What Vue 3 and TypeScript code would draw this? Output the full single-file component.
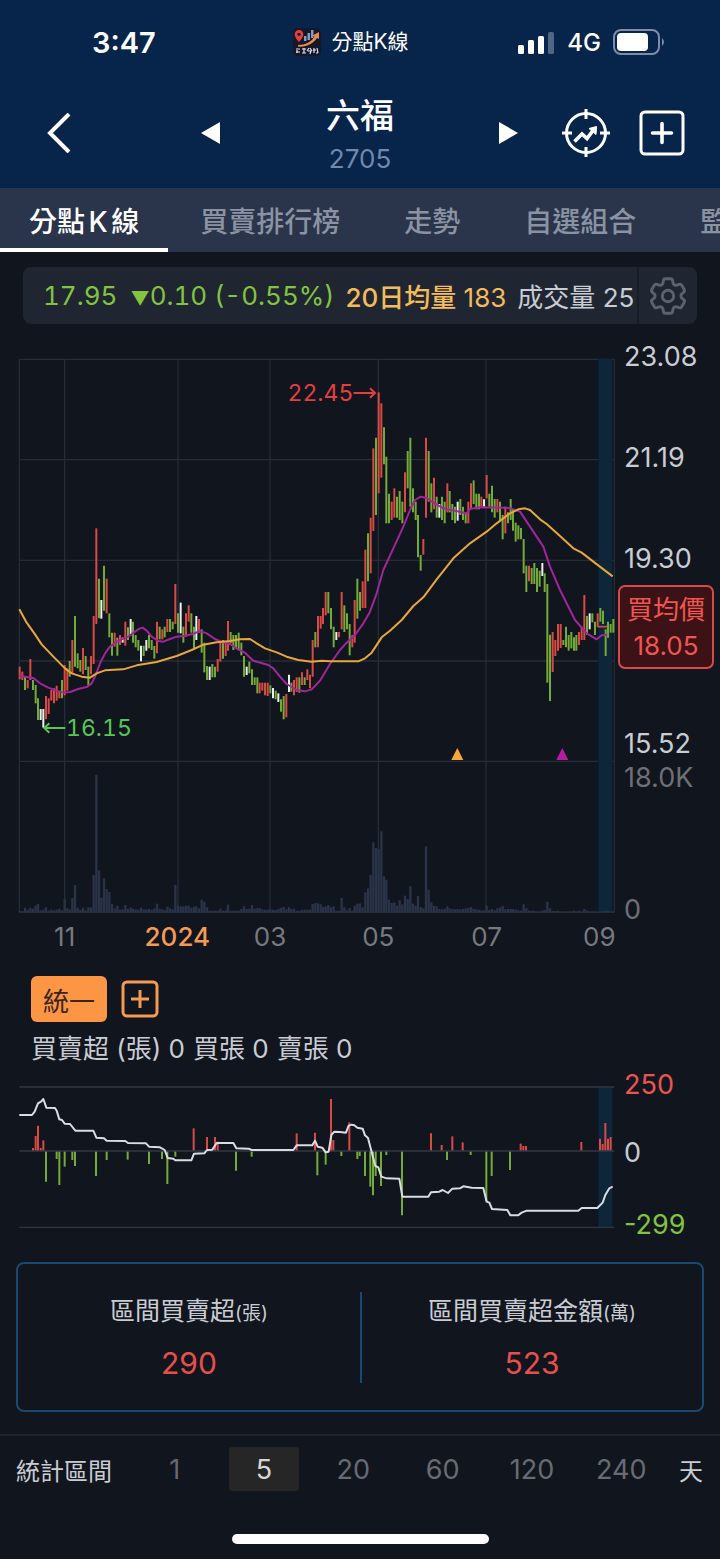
<script setup lang="ts">
import { ref } from 'vue'

type Candle = { x: number; high: number; low: number; kind: string }

// Chart space: three units per CSS pixel at the default width.
const FIRST_X = 59
const STEP = 7.917
const BASE = 1717
const xAt = (i: number): number => Math.round(FIRST_X + STEP * i)

const tabs = ['分點K線', '買賣排行榜', '走勢', '自選組合', '監控']
const activeTab = ref(0)

const periods = [1, 5, 20, 60, 120, 240]
const activePeriod = ref(5)

// One entry per trading day: colour, top, bottom.
const rawCandles = `
r980-1018 r995-1020 g1010-1050 r1020-1045 r957-1020 g1020-1050 g1035-1090 g1075-1140 w1107-1140 w1107-1163
r1068-1138 r1075-1122 r1050-1082 r1045-1090 r1037-1082 r1052-1075 g1020-1075 r975-1066 r985-1052 g963-1010
r900-1000 g828-980 g940-985 g960-995 r924-1003 g948-990 g980-1035 r948-1003 r828-972 r565-852
g716-835 w780-836 g677-812 r716-820 g820-892 g878-947 r878-920 g893-947 r885-915 w893-908
r845-917 g862-900 w837-883 g845-908 g885-922 g900-932 w917-964 g917-948 w900-932 g885-925
g900-930 g918-956 r845-940 g860-898 r868-898 g860-892 r837-876 g837-876 g845-868 r732-852
g820-878 w788-880 g860-908 r820-890 r796-845 g820-878 g860-925 w828-900 r837-878 g868-938
g908-997 g978-1020 w980-1020 g972-1012 g980-1012 r957-995 r905-965 g900-956 r908-948 r843-932
g876-910 g885-930 g885-925 g878-930 g908-946 g948-1010 w980-1005 g965-1000 g988-1035 g1012-1035
g1012-1060 r1028-1060 r1028-1052 r1028-1066 r1028-1068 g1036-1060 w1044-1075 g1052-1078 w1060-1086 g1078-1115
g1068-1138 r1062-1132 w1004-1056 g1028-1055 r1020-1066 r1012-1056 g1012-1058 r997-1035 g1012-1035 r988-1020
r1004-1045 r900-1010 g876-922 r828-922 r828-866 r804-852 r756-826 g756-820 g804-868 g860-922
w876-900 r876-892 r756-868 g796-876 g820-868 g852-946 r885-922 r780-908 g716-836 g756-812
r724-804 r629-804 g580-724 r533-700 r325-573 g293-525 r157-460 r190-413 g262-373 g350-550
g461-550 r485-540 r445-533 g470-533 g453-540 g485-550 r397-517 g333-445 g293-500 g445-517
g485-540 g525-652 g645-692 r597-644 r293-533 g333-485 g430-517 r413-508 g470-533 w492-533
g470-540 g485-550 r430-517 g453-517 g492-540 g500-550 w485-542 g477-525 g500-540 g522-550
r485-550 r430-508 g421-492 g461-508 g461-508 r470-500 w478-500 r405-475 g461-500 g437-517
g477-533 r477-517 g485-540 g525-598 r500-580 g517-550 g477-540 g508-572 g548-605 g556-598
g564-598 g597-700 g677-756 r677-724 g684-732 g669-732 g684-756 g692-740 w669-708 g700-756
g732-1028 g884-1083 r876-996 r900-948 r852-932 r852-924 g900-915 g860-922 g885-932 g876-925
g892-932 g885-932 r876-915 r860-900 r765-900 g828-885 w820-868 g820-847 g845-885 r820-860
g804-845 g812-852 g868-948 g845-893 g852-878 g837-878`

const candles: Candle[] = rawCandles
  .trim()
  .split(/\s+/)
  .map((item, i) => {
    const [high, low] = item.slice(1).split('-').map(Number)
    return { x: xAt(i), high, low, kind: item[0] }
  })

const volumes: number[] = [
  4, 4, 14, 8, 14, 11, 20, 25, 6, 8, 15, 5, 8, 6, 8, 11, 6, 40, 12, 9,
  43, 82, 14, 7, 14, 6, 15, 15, 112, 412, 126, 44, 102, 70, 61, 26, 12, 20, 8, 9,
  22, 11, 15, 11, 9, 8, 14, 9, 9, 10, 8, 12, 26, 11, 9, 7, 17, 12, 9, 82,
  20, 18, 18, 20, 20, 14, 17, 18, 12, 38, 32, 15, 5, 5, 5, 5, 11, 5, 6, 23,
  5, 5, 5, 5, 10, 18, 10, 11, 22, 11, 13, 13, 9, 8, 8, 9, 8, 7, 10, 13,
  16, 9, 16, 10, 11, 5, 5, 7, 8, 8, 8, 25, 28, 27, 24, 16, 18, 22, 15, 18,
  5, 5, 43, 15, 6, 13, 5, 20, 26, 27, 15, 60, 72, 112, 210, 193, 190, 243, 108, 98,
  38, 28, 30, 20, 37, 24, 50, 40, 78, 26, 20, 49, 16, 12, 198, 68, 30, 20, 18, 10,
  9, 11, 18, 12, 10, 9, 10, 9, 10, 12, 13, 16, 10, 9, 8, 6, 6, 20, 7, 10,
  6, 12, 14, 19, 9, 10, 10, 10, 9, 6, 5, 24, 13, 5, 5, 5, 3, 3, 5, 8,
  32, 12, 4, 4, 5, 3, 3, 3, 3, 3, 5, 3, 5, 3, 10, 6, 3, 3, 3, 3,
  3, 4, 6, 4, 3, 3,
]

const shortAverage =
  '58,1008 85,1012 100,1014 120,1030 145,1043 170,1052 190,1058 210,1056 235,1047 262,1040 275,1030 285,1010 300,970 315,940 330,920 350,905 385,890 405,875 418,866 428,863 440,872 455,890 475,903 490,905 510,897 530,890 550,888 575,883 600,873 620,880 645,897 665,906 690,912 714,928 735,938 760,962 805,975 820,985 840,1010 860,1032 890,1050 915,1054 935,1048 960,1022 990,972 1020,930 1040,908 1065,885 1090,850 1110,815 1130,760 1150,690 1180,625 1210,560 1230,510 1245,480 1262,470 1280,474 1300,488 1330,505 1400,520 1410,507 1440,502 1520,503 1540,508 1560,515 1580,545 1630,620 1650,680 1680,750 1725,840 1760,880 1790,898 1805,886 1822,884'
const longAverage =
  '58,808 80,848 103,880 125,913 160,950 195,985 215,1000 245,1010 270,1013 290,1000 315,991 370,988 410,976 470,966 530,948 575,930 610,914 650,907 690,903 720,898 750,897 770,910 795,925 830,937 860,950 895,960 935,965 965,962 990,964 1075,964 1095,955 1115,938 1145,892 1170,872 1205,840 1240,798 1270,772 1310,718 1360,655 1410,610 1460,575 1490,550 1530,520 1555,508 1575,505 1590,510 1620,538 1640,552 1680,588 1720,625 1745,638 1780,665 1838,709'

const gridRows = [58, 359, 661, 963, 1264, 1717]
const gridColumns = [58, 194, 534, 810, 1135, 1458, 1843]
const months = [
  { x: 194, text: '11' },
  { x: 532, text: '2024', year: true },
  { x: 810, text: '03' },
  { x: 1135, text: '05' },
  { x: 1460, text: '07' },
  { x: 1798, text: '09' },
]

// Branch net volume: [x, end of bar]; the zero line is at 573.
const buys: number[][] = [
  [99, 564], [107, 528], [114, 497], [122, 564], [130, 541], [581, 505], [621, 531], [645, 531], [653, 545],
  [890, 520], [945, 518], [993, 417], [1000, 540], [1048, 487], [1293, 520], [1325, 555], [1357, 529],
  [1388, 547], [1562, 551], [1570, 558], [1578, 558], [1744, 546], [1800, 536], [1808, 552], [1816, 489],
  [1824, 536], [1832, 531],
]
const sells: number[][] = [
  [138, 665], [170, 597], [178, 675], [194, 620], [217, 600], [225, 618], [288, 648], [320, 600], [383, 599],
  [447, 612], [486, 597], [502, 672], [526, 590], [708, 632], [755, 590], [952, 646], [977, 614], [1024, 588],
  [1072, 597], [1079, 588], [1095, 648], [1111, 680], [1119, 706], [1127, 648], [1143, 678], [1159, 585],
  [1206, 766], [1341, 600], [1412, 585], [1459, 724], [1475, 648], [1530, 630],
]
const holding =
  '58,465 96,465 104,455 114,430 124,424 130,417 139,443 165,444 170,452 178,478 186,480 194,491 210,492 226,512 280,512 289,533 312,535 320,542 376,543 384,549 438,550 447,560 480,562 494,570 503,594 520,596 526,601 574,601 582,581 613,580 621,570 637,569 650,549 700,549 709,565 746,566 755,570 880,570 890,556 937,556 945,542 953,560 967,563 977,577 986,575 994,525 1003,515 1020,516 1038,518 1046,497 1055,494 1063,496 1072,503 1088,506 1095,526 1104,534 1112,565 1120,595 1126,618 1135,622 1144,650 1160,655 1198,656 1207,710 1285,710 1293,697 1318,695 1328,690 1344,699 1357,686 1380,685 1390,679 1415,683 1450,684 1460,725 1468,728 1476,747 1522,750 1531,766 1554,766 1565,758 1580,752 1735,752 1745,744 1792,744 1808,728 1816,705 1828,685 1838,680'
</script>

<template>
  <div class="app">
    <header class="header">
      <div class="status">
        <span class="time">3:47</span>
        <div class="app-name">
          <svg class="logo" viewBox="0 0 28 28" aria-hidden="true">
            <rect width="28" height="28" rx="5" fill="#17172a" />
            <path d="M6 2a4.300 4.300 0 0 1 4.300 4.300C10.300 10 6 14 6 14S1.700 10 1.700 6.300A4.300 4.300 0 0 1 6 2Z" fill="#e2403f" />
            <circle cx="6" cy="6.300" r="1.600" fill="#17172a" />
            <path d="M11 8h2.500v5H11ZM14.500 5H17v7h-2.500ZM18 2h2.500v8H18Z" fill="#7f9cc4" />
            <path d="M5 17C13 17 18 14 21.500 8.500L19.500 7.500 26 4 26 11 24 10C20 16 13 19.500 5 18.500Z" fill="#ec8a4c" />
            <path d="M3 21h4M3 24h4M4 22v3M9 21h4M9 25h4M11 20v5M16 20l-2 3M17 20l2 3M15 23h3l-1 3M21 20v5M20 22h3M24 20l1 5M23 25h2" stroke="#dfe3ee" stroke-width="1.200" fill="none" />
          </svg>
          <span>分點K線</span>
        </div>
        <div class="signals">
          <svg class="bars" viewBox="0 0 38 24" aria-hidden="true">
            <rect x="1" y="15" width="6" height="9" rx="1.500" />
            <rect x="11" y="10" width="6" height="14" rx="1.500" />
            <rect x="21" y="6" width="6" height="18" rx="1.500" />
            <rect x="31" y="2" width="6" height="22" rx="1.500" opacity="0.300" />
          </svg>
          <span>4G</span>
          <svg class="battery" viewBox="0 0 52 26" aria-hidden="true">
            <rect x="1" y="1" width="45" height="24" rx="7" fill="none" stroke="#7f8da8" stroke-width="2" />
            <rect x="4" y="4" width="31" height="18" rx="4" />
            <path d="M49 9q4 4 0 8Z" fill="#7f8da8" />
          </svg>
        </div>
      </div>

      <nav class="stock-nav" aria-label="個股">
        <div class="nav-left">
          <button type="button" class="icon-btn back" aria-label="返回">
            <svg viewBox="0 0 24 40"><path d="M22 1 3 20 22 39" fill="none" stroke="#fff" stroke-width="4" /></svg>
          </button>
          <button type="button" class="icon-btn step" aria-label="上一檔">
            <svg viewBox="0 0 20 22"><path d="M19 0V22L0 11Z" fill="#fff" /></svg>
          </button>
        </div>
        <div class="stock">
          <h1>六福</h1>
          <p>2705</p>
        </div>
        <div class="nav-right">
          <button type="button" class="icon-btn step" aria-label="下一檔">
            <svg viewBox="0 0 20 22"><path d="M0 0V22L19 11Z" fill="#fff" /></svg>
          </button>
          <button type="button" class="icon-btn target" aria-label="走勢鎖定">
            <svg viewBox="0 0 48 48" fill="none" stroke="#fff" stroke-width="3">
              <circle cx="24" cy="24" r="19.500" />
              <path d="M24 0v10M24 38v10M0 24h10M38 24h10" />
              <path d="M12.500 32.500 20 25l5 4.500 6-8" stroke-width="3.600" />
              <path d="M27 19.500 34.500 17.500 34 25.500Z" fill="#fff" stroke-width="1" />
            </svg>
          </button>
          <button type="button" class="icon-btn add" aria-label="加入自選">
            <svg viewBox="0 0 46 46" fill="none" stroke="#fff" stroke-width="3">
              <rect x="2" y="2" width="42" height="42" rx="4" />
              <path d="M23 13.500v19M13.500 23h19" stroke-width="3.600" stroke-linecap="round" />
            </svg>
          </button>
        </div>
      </nav>
    </header>

    <nav class="tabs" aria-label="分頁">
      <button
        v-for="(tab, i) in tabs"
        :key="tab"
        type="button"
        class="tab"
        :class="{ active: i === activeTab }"
        @click="activeTab = i"
      >{{ tab }}</button>
    </nav>

    <main class="content">
      <section class="quote">
        <div class="quote-text">
          <span class="down">17.95</span>
          <span class="down change"><i>▼</i>0.10 (-0.55%)</span>
          <span class="average"><b>20日均量</b> 183</span>
          <span class="volume">成交量 25</span>
        </div>
        <button type="button" class="settings" aria-label="設定">
          <svg viewBox="0 0 24 24" fill="none" stroke="#5d636d" stroke-width="1.500">
            <path d="M9.594 3.940c.09-.542.56-.94 1.110-.94h2.593c.55 0 1.020.398 1.110.94l.213 1.281c.063.374.313.686.645.87.074.04.147.083.22.127.325.196.72.257 1.075.124l1.217-.456a1.125 1.125 0 0 1 1.370.49l1.296 2.247a1.125 1.125 0 0 1-.26 1.431l-1.003.827c-.293.241-.438.613-.43.992a7.723 7.723 0 0 1 0 .255c-.008.378.137.75.43.991l1.004.827c.424.35.534.955.26 1.430l-1.298 2.247a1.125 1.125 0 0 1-1.369.491l-1.217-.456c-.355-.133-.75-.072-1.076.124a6.470 6.470 0 0 1-.22.128c-.331.183-.581.495-.644.869l-.213 1.281c-.09.543-.56.94-1.110.94h-2.594c-.55 0-1.019-.398-1.110-.94l-.213-1.281c-.062-.374-.312-.686-.644-.87a6.520 6.520 0 0 1-.22-.127c-.325-.196-.72-.257-1.076-.124l-1.217.456a1.125 1.125 0 0 1-1.369-.49l-1.297-2.247a1.125 1.125 0 0 1 .26-1.431l1.004-.827c.292-.24.437-.613.43-.991a6.932 6.932 0 0 1 0-.255c.007-.38-.138-.751-.43-.992l-1.004-.827a1.125 1.125 0 0 1-.26-1.430l1.297-2.247a1.125 1.125 0 0 1 1.370-.491l1.216.456c.356.133.751.072 1.076-.124.072-.044.146-.086.22-.128.332-.183.582-.495.644-.869l.214-1.280Z" />
            <circle cx="12" cy="12" r="3" />
          </svg>
        </button>
      </section>

      <section class="chart-row">
        <svg class="chart price-chart" viewBox="57 57 1788 1773" role="img" aria-label="K線圖">
          <g class="grid">
            <line v-for="y in gridRows" :key="'r' + y" x1="58" x2="1843" :y1="y" :y2="y" />
            <line v-for="x in gridColumns" :key="'c' + x" :x1="x" :x2="x" y1="58" y2="1717" />
          </g>
          <rect class="band" x="1795" y="57" width="42" height="1660" />
          <g class="volumes">
            <line v-for="(v, i) in volumes" :key="i" :x1="xAt(i)" :x2="xAt(i)" :y1="BASE - v" :y2="BASE" />
          </g>
          <g class="candles">
            <line v-for="c in candles" :key="c.x" :class="c.kind" :x1="c.x" :x2="c.x" :y1="c.high" :y2="c.low" />
          </g>
          <polyline class="ma short" :points="shortAverage" />
          <polyline class="ma long" :points="longAverage" />
          <line class="cost" x1="1792" x2="1822" y1="860" y2="860" />
          <path d="M1372 1224 1390 1260H1354Z" fill="#f5a934" />
          <path d="M1687 1224 1705 1260H1669Z" fill="#b41fa0" />
          <g class="high">
            <text x="1060" y="184" text-anchor="end">22.45</text>
            <path d="M1061 159h63M1110 145l15 14-15 14" />
          </g>
          <g class="low">
            <text x="198" y="1188">16.15</text>
            <path d="M196 1164h-62M148 1150l-15 14 15 14" />
          </g>
          <text
            v-for="m in months"
            :key="m.text"
            class="month"
            :class="{ year: m.year }"
            :x="m.x"
            y="1818"
            text-anchor="middle"
          >{{ m.text }}</text>
        </svg>
        <div class="axis price-axis">
          <span>23.08</span>
          <span>21.19</span>
          <span>19.30</span>
          <div class="cost-box">
            <div>買均價</div>
            <div>18.05</div>
          </div>
          <span class="bottom">15.52</span>
          <span class="dim">18.0K</span>
          <span class="dim zero">0</span>
        </div>
      </section>

      <section class="brokers">
        <button type="button" class="chip">統一</button>
        <button type="button" class="icon-btn add-broker" aria-label="新增分點">
          <svg viewBox="0 0 38 38" fill="none" stroke="#f59a50" stroke-width="3">
            <rect x="2" y="2" width="34" height="34" rx="4" />
            <path d="M19 10v18M10 19h18" />
          </svg>
        </button>
      </section>
      <p class="summary"><span>買賣超 (張) 0</span><span>買張 0</span><span>賣張 0</span></p>

      <section class="chart-row">
        <svg class="chart net-chart" viewBox="57 378 1788 429" role="img" aria-label="分點買賣超">
          <rect class="band" x="1795" y="381" width="42" height="421" />
          <g class="candles">
            <line v-for="b in buys" :key="b[0]" class="r" :x1="b[0]" :x2="b[0]" :y1="b[1]" y2="573" />
            <line v-for="s in sells" :key="s[0]" class="g" :x1="s[0]" :x2="s[0]" y1="573" :y2="s[1]" />
          </g>
          <g class="grid strong">
            <line x1="58" x2="1843" y1="381" y2="381" />
            <line x1="58" x2="1843" y1="573" y2="573" />
            <line x1="58" x2="1843" y1="802" y2="802" />
          </g>
          <polyline class="holding" :points="holding" />
        </svg>
        <div class="axis net-axis">
          <span class="up">250</span>
          <span>0</span>
          <span class="down">-299</span>
        </div>
      </section>

      <section class="totals">
        <div class="total">
          <div class="total-label">區間買賣超<small>(張)</small></div>
          <div class="total-value">290</div>
        </div>
        <div class="total">
          <div class="total-label">區間買賣超金額<small>(萬)</small></div>
          <div class="total-value">523</div>
        </div>
      </section>
    </main>

    <footer class="footer">
      <div class="range">
        <span>統計區間</span>
        <div class="periods">
          <button
            v-for="p in periods"
            :key="p"
            type="button"
            :class="{ active: p === activePeriod }"
            :aria-pressed="p === activePeriod"
            @click="activePeriod = p"
          >{{ p }}</button>
        </div>
        <span>天</span>
      </div>
      <div class="home-indicator"></div>
    </footer>
  </div>
</template>

<style>
html,
body {
  background: #11151e;
}
</style>

<style scoped>
.app {
  color: #c9ccd3;
  background: #11151e;
  font-family: Inter, "Noto Sans CJK TC", sans-serif;
  font-size: 26px;
  overflow: hidden;
}
button {
  font: inherit;
  border: 0;
  padding: 0;
  background: none;
  color: inherit;
  cursor: pointer;
}
svg {
  display: block;
}
h1,
p {
  margin: 0;
}

.header {
  background: #07244b;
  color: #fff;
  height: 188px;
}
.status {
  display: grid;
  grid-template-columns: 1fr auto 1fr;
  align-items: center;
  height: 84px;
  padding: 0 55px 0 37px;
}
.time {
  padding-left: 55px;
  font-size: 29px;
  font-weight: 600;
}
.app-name {
  display: flex;
  align-items: center;
  gap: 10px;
  font-size: 21px;
  line-height: 28px;
}
.logo {
  width: 28px;
  height: 28px;
}
.signals {
  display: flex;
  align-items: center;
  justify-content: flex-end;
  gap: 12px;
  font-size: 24px;
  font-weight: 500;
  fill: #fff;
}
.bars {
  width: 38px;
  height: 24px;
}
.battery {
  width: 52px;
  height: 26px;
}

.stock-nav {
  display: grid;
  grid-template-columns: 1fr 278px 1fr;
  align-items: center;
  height: 98px;
}
.nav-left,
.nav-right {
  display: flex;
  align-items: center;
}
.nav-left {
  justify-content: space-between;
  padding-left: 47px;
}
.nav-right {
  justify-content: space-between;
  padding-right: 35px;
}
.icon-btn svg {
  width: 100%;
}
.back {
  width: 24px;
}
.step {
  width: 20px;
}
.target {
  width: 48px;
  margin-left: 14px;
}
.add {
  width: 46px;
}
.stock {
  padding-top: 4px;
  text-align: center;
}
.stock h1 {
  font-size: 34px;
  line-height: 48px;
  font-weight: 500;
}
.stock p {
  font-size: 26px;
  line-height: 38px;
  color: #7388ab;
}

.tabs {
  display: flex;
  height: 64px;
  background: #2a354b;
  overflow: hidden;
}
.tab {
  flex: none;
  padding: 4px 32px 0;
  font-size: 28px;
  font-weight: 500;
  color: #8b93a3;
  border-bottom: 4px solid transparent;
  text-autospace: normal;
}
.tab.active {
  padding: 4px 29px 0;
  color: #fff;
  border-bottom-color: #fff;
}

.content {
  padding-top: 15px;
}
.quote {
  display: flex;
  height: 57px;
  margin: 0 23px;
  border-radius: 8px;
  background: #1f2632;
}
.quote-text {
  flex: 1;
  min-width: 0;
  display: flex;
  align-items: center;
  gap: 11px;
  padding-left: 20px;
  overflow: hidden;
  white-space: nowrap;
  border-right: 2px solid #171c26;
}
.quote-text .down {
  font-variant-numeric: tabular-nums;
}
.change {
  padding-left: 2px;
}
.change i {
  font-size: 19px;
  font-style: normal;
}
.average b {
  font-weight: 500;
}
.average {
  color: #f3bb5c;
}
.down {
  color: #82c341;
}
.up {
  color: #ea5550;
}
.settings {
  width: 58px;
  display: grid;
  place-items: center;
}
.settings svg {
  width: 46px;
}

.chart-row {
  display: flex;
  align-items: flex-start;
  padding: 0 6px 0 19px;
}
.quote + .chart-row {
  margin-top: 16px;
}
.chart {
  flex: 1;
  min-width: 0;
  margin-top: 19px;
  overflow: visible;
}
.axis {
  width: 96px;
  margin-left: 3px;
  display: flex;
  flex-direction: column;
  font-size: 27px;
  line-height: 34px;
}
.axis span {
  padding-left: 6px;
}
.price-axis span + span {
  margin-top: 67px;
}
.cost-box {
  box-sizing: border-box;
  height: 84px;
  margin: 9px 0 58px;
  padding-top: 5px;
  border: 2px solid #d34b4b;
  border-radius: 7px;
  background: #3c1216;
  color: #f0564f;
  text-align: center;
  font-size: 26px;
  line-height: 36px;
}
.price-axis .dim {
  margin-top: 0;
  color: #6e7076;
}
.price-axis .zero {
  margin-top: 98px;
}
.net-chart {
  margin-top: 18px;
}
.net-axis {
  height: 174px;
  gap: 34px;
}
.net-axis .down {
  margin-top: auto;
}

.grid line {
  stroke: #262c38;
  stroke-width: 4;
}
.grid.strong line {
  stroke: #303744;
}
.band {
  fill: #0d263a;
}
.volumes line {
  stroke: #2a3448;
  stroke-width: 7;
}
.candles line {
  stroke-width: 6;
}
.candles .r {
  stroke: #d94a45;
}
.candles .g {
  stroke: #74aa37;
}
.candles .w {
  stroke: #eef0f0;
}
.ma {
  fill: none;
  stroke-width: 6;
  stroke-linejoin: round;
}
.short {
  stroke: #a1259b;
}
.long {
  stroke: #e7a73a;
}
.cost {
  stroke: #d94a45;
  stroke-width: 5;
}
.holding {
  fill: none;
  stroke: #d9dce3;
  stroke-width: 6;
  stroke-linejoin: round;
}
.high text,
.low text {
  font-size: 69px;
  font-variant-numeric: tabular-nums;
}
.high path,
.low path {
  fill: none;
  stroke-width: 6;
}
.high text {
  fill: #e2403f;
}
.high path {
  stroke: #e2403f;
}
.low text {
  fill: #55c655;
}
.low path {
  stroke: #55c655;
}
.month {
  font-size: 78px;
  fill: #77797f;
}
.month.year {
  fill: #f39a55;
  font-weight: 500;
}

.brokers {
  display: flex;
  align-items: center;
  gap: 14px;
  margin: 26px 31px 0;
}
.chip {
  height: 46px;
  padding: 0 12px;
  border-radius: 6px;
  background: #fd9644;
  color: #3b2413;
}
.add-broker {
  width: 38px;
}
.summary {
  display: flex;
  gap: 8px;
  margin-top: 8px;
  padding-left: 31px;
  line-height: 38px;
  white-space: nowrap;
}

.totals {
  display: grid;
  grid-template-columns: 1fr 1fr;
  margin: 20px 16px 0;
  padding: 28px 0 27px;
  border: 2px solid #174a73;
  border-radius: 8px;
  text-align: center;
}
.total + .total {
  border-left: 2px solid #174a73;
}
.total-label {
  font-size: 25px;
  line-height: 38px;
}
.total-label small {
  font-size: 19px;
}
.total-value {
  margin-top: 10px;
  font-size: 30px;
  line-height: 40px;
  color: #e5504c;
}

.footer {
  margin-top: 22px;
  border-top: 2px solid #1d222d;
}
.range {
  display: flex;
  align-items: center;
  height: 66px;
  padding: 0 17px 0 16px;
  font-size: 24px;
}
.periods {
  flex: 1;
  display: grid;
  grid-template-columns: repeat(6, 1fr);
  justify-items: center;
  margin: 0 13px 0 18px;
  font-size: 27px;
  color: #686b72;
}
.periods button {
  width: 70px;
  height: 44px;
  border-radius: 3px;
}
.periods .active {
  background: #262626;
  color: #d6d6d6;
}
.home-indicator {
  width: 257px;
  height: 10px;
  margin: 32px auto 15px;
  border-radius: 5px;
  background: #fff;
}
</style>
